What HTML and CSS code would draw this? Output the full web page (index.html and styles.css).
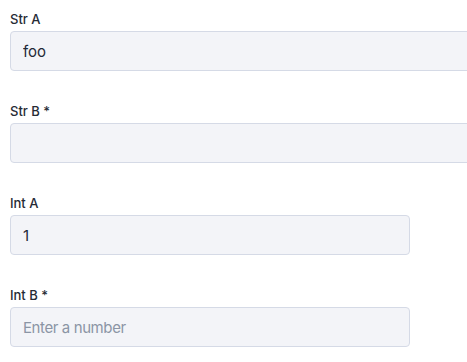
FILE: index.html
```html
<!DOCTYPE html>
<html>
<head>
<meta charset="utf-8">
<link rel="stylesheet" href="styles.css">
</head>
<body>
<form class="form">
  <div class="field">
    <label class="label" for="a">Str A</label>
    <input class="input input-wide" id="a" type="text" value="foo">
  </div>
  <div class="field">
    <label class="label" for="b">Str B *</label>
    <input class="input input-wide" id="b" type="text">
  </div>
  <div class="field">
    <label class="label" for="c">Int A</label>
    <input class="input input-num" id="c" type="text" value="1">
  </div>
  <div class="field">
    <label class="label" for="d">Int B *</label>
    <input class="input input-num" id="d" type="text" placeholder="Enter a number">
  </div>
</form>
</body>
</html>
```
FILE: styles.css
```css
html, body {
  margin: 0;
  padding: 0;
  background: #ffffff;
  overflow: hidden;
}
body {
  font-family: Inter, "Noto Sans", sans-serif;
  color: #1f2937;
}
.form {
  display: flex;
  flex-direction: column;
  gap: 32px;
  padding: 11px 0 0 10px;
  overflow: hidden;
}
.field {
  display: flex;
  flex-direction: column;
  align-items: flex-start;
}
.label {
  font-size: 13px;
  line-height: 16px;
  font-weight: 500;
  color: #262b35;
  margin-bottom: 4px;
}
.input {
  box-sizing: border-box;
  height: 40px;
  padding: 0 12px;
  border: 1px solid #d5dae6;
  border-radius: 4px;
  background: #f3f4f8;
  font-family: Inter, "Noto Sans", sans-serif;
  font-size: 15px;
  color: #1f2937;
  outline: none;
}
.input::placeholder {
  color: #8b95a5;
  letter-spacing: -0.4px;
}
.input-wide {
  width: 600px;
  flex-shrink: 0;
}
.input-num {
  width: 400px;
}
```
